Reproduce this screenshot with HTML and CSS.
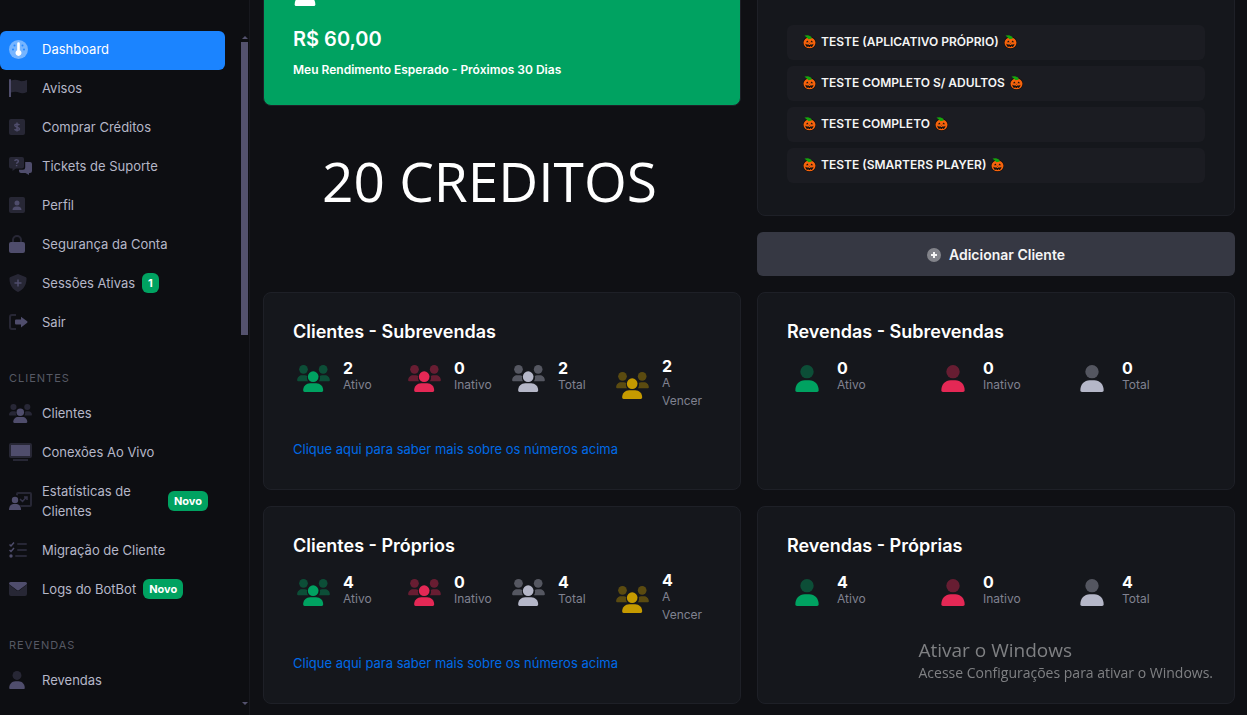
FILE: index.html
```html
<!DOCTYPE html>
<html lang="pt-BR">
<head>
    <meta charset="UTF-8">
    <meta name="viewport" content="width=device-width, initial-scale=1">
    <title>Dashboard</title>
    <link rel="stylesheet" href="styles.css">
</head>
<body>
    <!-- icons -->
    <svg class="sprite" aria-hidden="true">
        <symbol id="i-users" viewBox="0 0 98 81">
            <g opacity=".4">
                <circle cx="19" cy="13" r="13"/>
                <circle cx="78" cy="13" r="13"/>
                <path d="M0 46c0-9 7-15 15-15h8c3 0 5 1 7 2-2 7 0 12 3 16H3c-2 0-3-1-3-3zM98 46c0-9-7-15-15-15h-8c-3 0-5 1-7 2 2 7 0 12-3 16h30c2 0 3-1 3-3z"/>
            </g>
            <circle cx="48" cy="35" r="16"/>
            <path d="M18 76c0-12 9-21 21-21h18c12 0 21 9 21 21 0 3-2 5-4 5H22c-2 0-4-2-4-5z"/>
        </symbol>
        <symbol id="i-user" viewBox="0 0 70 81">
            <circle opacity=".4" cx="35" cy="20" r="20"/>
            <path d="M0 76c0-17 12-30 28-30h14c16 0 28 13 28 30 0 3-2 5-5 5H5c-3 0-5-2-5-5z"/>
        </symbol>
        <symbol id="i-pumpkin" viewBox="0 0 13 14">
            <ellipse cx="6.5" cy="7.8" rx="6.5" ry="6.1" fill="#0b0b0b"/>
            <ellipse cx="6.5" cy="7.8" rx="6" ry="5.5" fill="#f7630c"/>
            <path d="M1.5.6 5 .2l3 1.2.8 2.200-3.200.6z" fill="#16a50c"/>
            <path d="M3 7.200 4.300 5.500 5.600 7.200zM7.400 7.200l1.300-1.700L10 7.200zM6 8.500l.5-.8.5.8zM2.500 8.800l1.800.9.800-.6.800.8h1.200l.8-.8.8.6 1.800-.9c-.3 2-1.200 3-2.300 3.200l-.5-1-.9.900h-1l-.8-.9-.5 1c-1.100-.2-1.900-1.200-2.200-3.200z" fill="#111"/>
        </symbol>
    </svg>

    <div class="layout">
        <aside class="sidebar">
            <nav class="menu">
                <a class="menu-link active" href="#">
                    <span class="menu-icon"><svg width="19" height="19" viewBox="0 0 19 19"><circle opacity=".4" cx="9.5" cy="9.5" r="9.5"/><g opacity=".9"><circle class="dot" cx="5.5" cy="5.5" r="1"/><circle class="dot" cx="13.5" cy="5.5" r="1"/><circle class="dot" cx="4" cy="9.5" r="1"/><circle class="dot" cx="15" cy="9.5" r="1"/></g><path d="M8.2 3.500a1.300 1.300 0 0 1 2.600 0v6.700a3 3 0 1 1-2.600 0z"/></svg></span>
                    <span class="menu-title">Dashboard</span>
                </a>
                <a class="menu-link" href="#">
                    <span class="menu-icon"><svg width="18" height="18" viewBox="0 0 18 18"><path d="M0 1a1 1 0 0 1 2 0v17H0z"/><path opacity=".4" d="M2 1.500c3-1.300 6-1 8 0s4 1 8-.5V13c-3 1.600-6 1.500-8 .5s-5-1-8 0z"/></svg></span>
                    <span class="menu-title">Avisos</span>
                </a>
                <a class="menu-link" href="#">
                    <span class="menu-icon"><svg width="16" height="16" viewBox="0 0 16 16"><rect opacity=".4" width="16" height="16" rx="2"/><path class="line" d="M8 3.500v9M10.500 6C9.500 5 5.700 4.600 5.800 6.500S10.600 8 10.500 10 6.500 11.500 5.500 10.200"/></svg></span>
                    <span class="menu-title">Comprar Créditos</span>
                </a>
                <a class="menu-link" href="#">
                    <span class="menu-icon"><svg width="23" height="18" viewBox="0 0 23 18"><path opacity=".4" d="M2 0h11a2 2 0 0 1 2 2v7.500a2 2 0 0 1-2 2H7L3.500 14v-2.500H2a2 2 0 0 1-2-2V2a2 2 0 0 1 2-2z"/><path class="line" d="M5.800 4c.2-2 3.700-1.700 3.600.2 0 1.200-1.800 1.100-1.800 2.600M7.600 8v1.300"/><path d="M16.200 5H21a2 2 0 0 1 2 2v7a2 2 0 0 1-2 2h-1v2l-3.500-2H12a2 2 0 0 1-2-2v-1.300h4a2.200 2.200 0 0 0 2.200-2.200z"/></svg></span>
                    <span class="menu-title">Tickets de Suporte</span>
                </a>
                <a class="menu-link" href="#">
                    <span class="menu-icon"><svg width="16" height="16" viewBox="0 0 16 16"><rect opacity=".4" width="16" height="16" rx="2"/><circle cx="8" cy="6" r="2.500"/><path d="M3.500 13c0-2.300 1.500-3.500 3.500-3.500h2c2 0 3.500 1.200 3.500 3.500z"/></svg></span>
                    <span class="menu-title">Perfil</span>
                </a>
                <a class="menu-link" href="#">
                    <span class="menu-icon"><svg width="16" height="18" viewBox="0 0 16 18"><path opacity=".4" d="M3 7V5a5 5 0 0 1 10 0v2h-2V5a3 3 0 0 0-6 0v2z"/><rect y="7" width="16" height="11" rx="2"/></svg></span>
                    <span class="menu-title">Segurança da Conta</span>
                </a>
                <a class="menu-link" href="#">
                    <span class="menu-icon"><svg width="18" height="18" viewBox="0 0 18 18"><path opacity=".4" d="M9 0l7.500 3c.7.300 1 .8 1 1.400C17.500 11 14.500 15.500 9 18 3.500 15.500.5 11 .5 4.400c0-.6.300-1.100 1-1.400z"/><path class="line" d="M9 5.500v7M5.500 9h7"/></svg></span>
                    <span class="menu-title">Sessões Ativas</span>
                    <span class="badge">1</span>
                </a>
                <a class="menu-link" href="#">
                    <span class="menu-icon"><svg width="19" height="16" viewBox="0 0 19 16"><path opacity=".4" d="M7 0H3a3 3 0 0 0-3 3v10a3 3 0 0 0 3 3h4v-2H3a1 1 0 0 1-1-1V3a1 1 0 0 1 1-1h4z"/><path d="M12 2.700 18.200 7.300a1 1 0 0 1 0 1.400L12 13.500V10.500H7a1 1 0 0 1-1-1v-3a1 1 0 0 1 1-1h5z"/></svg></span>
                    <span class="menu-title">Sair</span>
                </a>

                <h2 class="menu-heading">CLIENTES</h2>
                <a class="menu-link" href="#">
                    <span class="menu-icon"><svg width="23" height="19"><use href="#i-users"/></svg></span>
                    <span class="menu-title">Clientes</span>
                </a>
                <a class="menu-link" href="#">
                    <span class="menu-icon"><svg width="23" height="18" viewBox="0 0 23 18"><path opacity=".4" fill-rule="evenodd" d="M2 0h19a2 2 0 0 1 2 2v11a2 2 0 0 1-2 2H2a2 2 0 0 1-2-2V2a2 2 0 0 1 2-2zm0 2v11h19V2zM4 16h15v2H4z"/><rect x="2" y="2" width="19" height="11"/></svg></span>
                    <span class="menu-title">Conexões Ao Vivo</span>
                </a>
                <a class="menu-link" href="#">
                    <span class="menu-icon"><svg width="23" height="18" viewBox="0 0 23 18"><path opacity=".4" d="M7 3V2a2 2 0 0 1 2-2h12a2 2 0 0 1 2 2v11a2 2 0 0 1-2 2h-9l-1-2h10V2H9v1.500z"/><path class="line faint" d="M11 7l2.500 2.500L17.500 5M15 5h3v3"/><circle cx="6" cy="8" r="3.200"/><path d="M0 18c0-4 2-6 5-6h2c3 0 5 2 5 6z"/></svg></span>
                    <span class="menu-title">Estatísticas de Clientes</span>
                    <span class="badge">Novo</span>
                </a>
                <a class="menu-link" href="#">
                    <span class="menu-icon"><svg width="18" height="16" viewBox="0 0 18 16"><path class="line" d="M.5 2.500 2 4l3-3.500M.5 8 2 9.500 5 6"/><circle cx="2" cy="14" r="1.700"/><g opacity=".4"><rect x="8" y="1" width="10" height="2" rx="1"/><rect x="8" y="7" width="10" height="2" rx="1"/><rect x="6" y="13" width="12" height="2" rx="1"/></g></svg></span>
                    <span class="menu-title">Migração de Cliente</span>
                </a>
                <a class="menu-link" href="#">
                    <span class="menu-icon"><svg width="18" height="14" viewBox="0 0 18 14"><path opacity=".4" d="M0 2.500 8 8.700a1.700 1.700 0 0 0 2 0L18 2.500V12a2 2 0 0 1-2 2H2a2 2 0 0 1-2-2z"/><path d="M1.500 0h15A1.500 1.500 0 0 1 18 1.500c0 .5-.2.800-.5 1L9.800 8.300a1.400 1.400 0 0 1-1.600 0L.5 2.500C.2 2.300 0 2 0 1.500A1.500 1.500 0 0 1 1.500 0z"/></svg></span>
                    <span class="menu-title">Logs do BotBot</span>
                    <span class="badge">Novo</span>
                </a>

                <h2 class="menu-heading">REVENDAS</h2>
                <a class="menu-link" href="#">
                    <span class="menu-icon"><svg width="16" height="18"><use href="#i-user"/></svg></span>
                    <span class="menu-title">Revendas</span>
                </a>
            </nav>
            <div class="scrollbar">
                <span class="arrow-up"></span>
                <span class="track"><span class="thumb"></span></span>
                <span class="arrow-down"></span>
            </div>
        </aside>

        <main class="content">
            <div class="column">
                <section class="card income">
                    <svg width="24" height="24"><use href="#i-user"/></svg>
                    <div class="income-value">R$ 60,00</div>
                    <div class="income-label">Meu Rendimento Esperado - Próximos 30 Dias</div>
                </section>
                <h1 class="credits">20 CREDITOS</h1>
            </div>

            <div class="column">
                <section class="card tests">
                    <button class="test" type="button"><svg width="13" height="14"><use href="#i-pumpkin"/></svg>TESTE (APLICATIVO PRÓPRIO)<svg width="13" height="14"><use href="#i-pumpkin"/></svg></button>
                    <button class="test" type="button"><svg width="13" height="14"><use href="#i-pumpkin"/></svg>TESTE COMPLETO S/ ADULTOS<svg width="13" height="14"><use href="#i-pumpkin"/></svg></button>
                    <button class="test" type="button"><svg width="13" height="14"><use href="#i-pumpkin"/></svg>TESTE COMPLETO<svg width="13" height="14"><use href="#i-pumpkin"/></svg></button>
                    <button class="test" type="button"><svg width="13" height="14"><use href="#i-pumpkin"/></svg>TESTE (SMARTERS PLAYER)<svg width="13" height="14"><use href="#i-pumpkin"/></svg></button>
                </section>
                <button class="add-client" type="button">
                    <svg width="14" height="14" viewBox="0 0 14 14"><circle opacity=".4" cx="7" cy="7" r="7"/><path d="M6 4h2v2h2v2H8v2H6V8H4V6h2z"/></svg>
                    Adicionar Cliente
                </button>
            </div>

            <section class="card">
                <h3 class="card-title">Clientes - Subrevendas</h3>
                <div class="stats four">
                    <div class="stat green"><span class="symbol"><svg width="33" height="27"><use href="#i-users"/></svg></span><div><b>2</b><span>Ativo</span></div></div>
                    <div class="stat red"><span class="symbol"><svg width="33" height="27"><use href="#i-users"/></svg></span><div><b>0</b><span>Inativo</span></div></div>
                    <div class="stat gray"><span class="symbol"><svg width="33" height="27"><use href="#i-users"/></svg></span><div><b>2</b><span>Total</span></div></div>
                    <div class="stat yellow"><span class="symbol"><svg width="33" height="27"><use href="#i-users"/></svg></span><div><b>2</b><span>A Vencer</span></div></div>
                </div>
                <a class="more" href="#">Clique aqui para saber mais sobre os números acima</a>
            </section>

            <section class="card">
                <h3 class="card-title">Revendas - Subrevendas</h3>
                <div class="stats three">
                    <div class="stat green"><span class="symbol"><svg width="24" height="27"><use href="#i-user"/></svg></span><div><b>0</b><span>Ativo</span></div></div>
                    <div class="stat red"><span class="symbol"><svg width="24" height="27"><use href="#i-user"/></svg></span><div><b>0</b><span>Inativo</span></div></div>
                    <div class="stat gray"><span class="symbol"><svg width="24" height="27"><use href="#i-user"/></svg></span><div><b>0</b><span>Total</span></div></div>
                </div>
            </section>

            <section class="card">
                <h3 class="card-title">Clientes - Próprios</h3>
                <div class="stats four">
                    <div class="stat green"><span class="symbol"><svg width="33" height="27"><use href="#i-users"/></svg></span><div><b>4</b><span>Ativo</span></div></div>
                    <div class="stat red"><span class="symbol"><svg width="33" height="27"><use href="#i-users"/></svg></span><div><b>0</b><span>Inativo</span></div></div>
                    <div class="stat gray"><span class="symbol"><svg width="33" height="27"><use href="#i-users"/></svg></span><div><b>4</b><span>Total</span></div></div>
                    <div class="stat yellow"><span class="symbol"><svg width="33" height="27"><use href="#i-users"/></svg></span><div><b>4</b><span>A Vencer</span></div></div>
                </div>
                <a class="more" href="#">Clique aqui para saber mais sobre os números acima</a>
            </section>

            <section class="card">
                <h3 class="card-title">Revendas - Próprias</h3>
                <div class="stats three">
                    <div class="stat green"><span class="symbol"><svg width="24" height="27"><use href="#i-user"/></svg></span><div><b>4</b><span>Ativo</span></div></div>
                    <div class="stat red"><span class="symbol"><svg width="24" height="27"><use href="#i-user"/></svg></span><div><b>0</b><span>Inativo</span></div></div>
                    <div class="stat gray"><span class="symbol"><svg width="24" height="27"><use href="#i-user"/></svg></span><div><b>4</b><span>Total</span></div></div>
                </div>
            </section>
        </main>
    </div>

    <div class="activate">
        <div class="activate-title">Ativar o Windows</div>
        <div>Acesse Configurações para ativar o Windows.</div>
    </div>
</body>
</html>
```
FILE: styles.css
```css
* {
    box-sizing: border-box;
}
body {
    margin: 0;
    background: #0f1014;
    color: #fff;
    font-family: Inter, "Liberation Sans", sans-serif;
    font-size: 13px;
    line-height: 20px;
}
a {
    text-decoration: none;
}
button {
    border: 0;
    color: #f5f5f5;
    font: inherit;
    cursor: pointer;
}
svg {
    display: block;
    flex-shrink: 0;
    fill: currentColor;
}
.sprite {
    position: absolute;
    width: 0;
    height: 0;
}
.layout {
    display: flex;
    height: 100vh;
    overflow: hidden;
}

/* sidebar */
.sidebar {
    position: relative;
    flex: 0 0 250px;
    padding: 31px 24px 0 0;
    background: #0d0e12;
    border-right: 1px solid #17181e;
}
.menu-link {
    display: flex;
    align-items: center;
    padding: 8px 17px 11px 9px;
    border-radius: 6px;
    color: #b5b7c8;
}
.menu-link.active {
    background: #1b84ff;
    color: #fff;
}
.menu-icon {
    flex: 0 0 33px;
    color: #4f4d6c;
}
.active .menu-icon {
    color: #fff;
}
.dot {
    fill: #1b84ff;
}
.line {
    fill: none;
    stroke: currentColor;
    stroke-width: 1.5;
}
.faint {
    opacity: .6;
}
.badge {
    margin-left: 7px;
    padding: 0 6px;
    border-radius: 6px;
    background: #00a261;
    color: #fff;
    font-size: 11px;
    font-weight: 700;
}
.menu-heading {
    margin: 0;
    padding: 25px 9px 7px;
    color: #565964;
    font-size: 11px;
    font-weight: 400;
    letter-spacing: 1px;
}
.scrollbar {
    position: absolute;
    top: 36px;
    right: 1px;
    bottom: 10px;
    width: 7px;
    display: flex;
    flex-direction: column;
    align-items: center;
}
.track {
    flex: 1;
    width: 7px;
    margin: 3px 0;
}
.thumb {
    display: block;
    height: 44.6%;
    background: #54526e;
}
.arrow-up,
.arrow-down {
    border: 3px solid transparent;
}
.arrow-up {
    border-top: 0;
    border-bottom-color: #54526e;
}
.arrow-down {
    border-bottom: 0;
    border-top-color: #54526e;
}

/* content, scrolled down a little */
.content {
    flex: 1;
    display: grid;
    grid-template-columns: 1fr 1fr;
    align-content: start;
    gap: 16px;
    margin-top: -40px;
    padding: 0 12px 12px 13px;
}
.column {
    display: flex;
    flex-direction: column;
    gap: 16px;
}
.card {
    padding: 28px 29px 30px;
    background: #15171c;
    border: 1px solid #1e2027;
    border-radius: 8px;
}
.income {
    padding: 21px 29px 25px;
    background: #00a261;
}
.income-value {
    margin: 21px 0 9px;
    font-size: 20px;
    font-weight: 600;
    line-height: 24px;
}
.income-label {
    font-size: 12px;
    font-weight: 600;
}
.credits {
    margin: 21px 0 0 59px;
    font-family: "Open Sans", sans-serif;
    font-size: 55px;
    font-weight: 400;
    line-height: 76px;
}
.tests {
    display: flex;
    flex-direction: column;
    gap: 6px;
    padding: 64px 29px 32px;
}
.test {
    display: flex;
    align-items: center;
    gap: 5px;
    height: 35px;
    padding: 0 16px 2px;
    border-radius: 6px;
    background: #1b1c22;
    font-size: 12px;
    font-weight: 600;
}
.add-client {
    display: flex;
    align-items: center;
    justify-content: center;
    gap: 8px;
    height: 44px;
    padding-top: 2px;
    border-radius: 6px;
    background: #363843;
    font-size: 14px;
    font-weight: 600;
}
.card-title {
    margin: 0 0 15px;
    font-size: 18px;
    font-weight: 600;
    line-height: 22px;
}
.stats {
    display: grid;
    align-items: start;
}
.four {
    grid-template-columns: 111fr 104fr 104fr 99fr;
}
.three {
    grid-template-columns: 146fr 139fr 133fr;
}
.stat {
    display: flex;
    align-items: center;
    gap: 10px;
}
.stat div {
    flex: 1;
    max-width: 48px;
    padding-bottom: 2px;
}
.symbol {
    display: flex;
    align-items: center;
    justify-content: center;
    flex: 0 0 40px;
    height: 40px;
}
.stat b,
.stat div span {
    display: block;
}
.stat b {
    color: #fff;
    font-size: 16px;
    font-weight: 700;
    line-height: 16px;
}
.stat div span {
    color: #808290;
    font-size: 12px;
    line-height: 18px;
}
.green {
    color: #00a261;
}
.red {
    color: #e42855;
}
.gray {
    color: #b5b7c8;
}
.yellow {
    color: #c59a00;
}
.more {
    display: block;
    margin-top: 27px;
    color: #006ae6;
}

/* watermark */
.activate {
    position: fixed;
    right: 34px;
    bottom: 32px;
    color: #7f8083;
    font-family: "Open Sans", sans-serif;
    font-size: 14px;
}
.activate-title {
    font-size: 19px;
    line-height: 26px;
}
```
